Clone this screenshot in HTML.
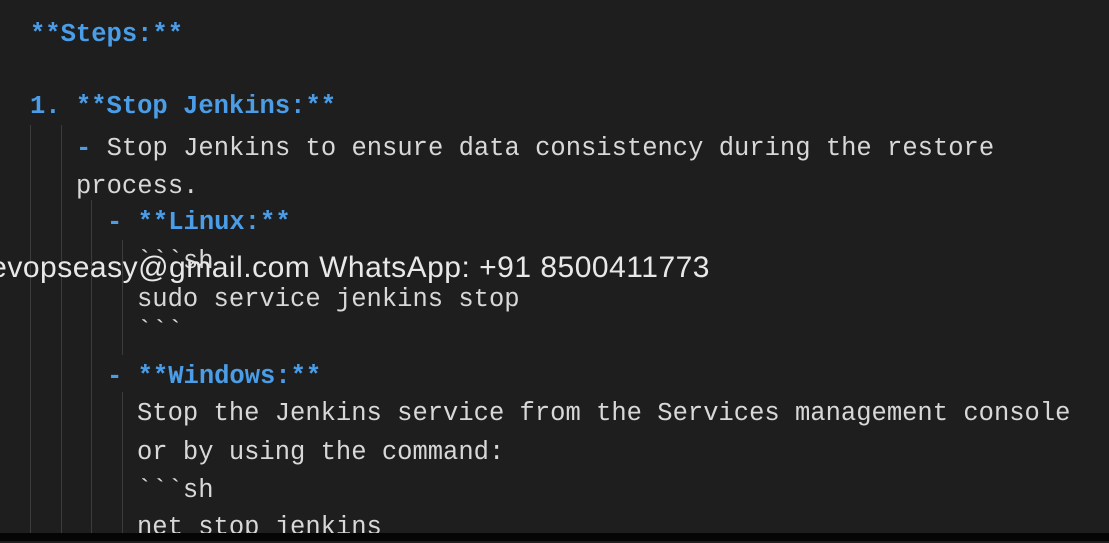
<!DOCTYPE html>
<html><head><style>
html,body{margin:0;padding:0;width:1109px;height:541px;overflow:hidden;background:#1e1e1e}
.l{position:absolute;font-family:"Liberation Mono",monospace;font-size:25.5px;color:#d8d8d8;white-space:pre;line-height:30px}
.b{color:#4a9de6;font-weight:bold}
.g{position:absolute;width:1px;background:#3c3c3c}
.w{position:absolute;font-family:"Liberation Sans",sans-serif;font-size:30px;color:#e8e8e8;white-space:pre;line-height:34px;letter-spacing:0.5px}
</style></head><body>
<div class="g" style="left:30px;top:125px;height:408px"></div>
<div class="g" style="left:61px;top:125px;height:408px"></div>
<div class="g" style="left:91px;top:200px;height:333px"></div>
<div class="g" style="left:122px;top:240px;height:115px"></div>
<div class="g" style="left:122px;top:392px;height:141px"></div>
<div class="l b" style="left:30px;top:20px">**Steps:**</div>
<div class="l b" style="left:30px;top:92px">1. **Stop Jenkins:**</div>
<div class="l" style="left:76px;top:134px"><span class="b">-</span> Stop Jenkins to ensure data consistency during the restore</div>
<div class="l" style="left:76px;top:172px">process.</div>
<div class="l b" style="left:107px;top:208px">- **Linux:**</div>
<div class="l" style="left:137px;top:247px">&#96;&#96;&#96;sh</div>
<div class="l" style="left:137px;top:285px">sudo service jenkins stop</div>
<div class="l" style="left:137px;top:317px">&#96;&#96;&#96;</div>
<div class="l b" style="left:107px;top:362px">- **Windows:**</div>
<div class="l" style="left:137px;top:399px">Stop the Jenkins service from the Services management console</div>
<div class="l" style="left:137px;top:438px">or by using the command:</div>
<div class="l" style="left:137px;top:476px">&#96;&#96;&#96;sh</div>
<div class="l" style="left:137px;top:513px">net stop jenkins</div>
<div class="w" style="right:399px;top:251px">devopseasy@gmail.com WhatsApp: +91 8500411773</div>
<div style="position:absolute;left:0;top:533px;width:1109px;height:8px;background:#050505"></div>
</body></html>
